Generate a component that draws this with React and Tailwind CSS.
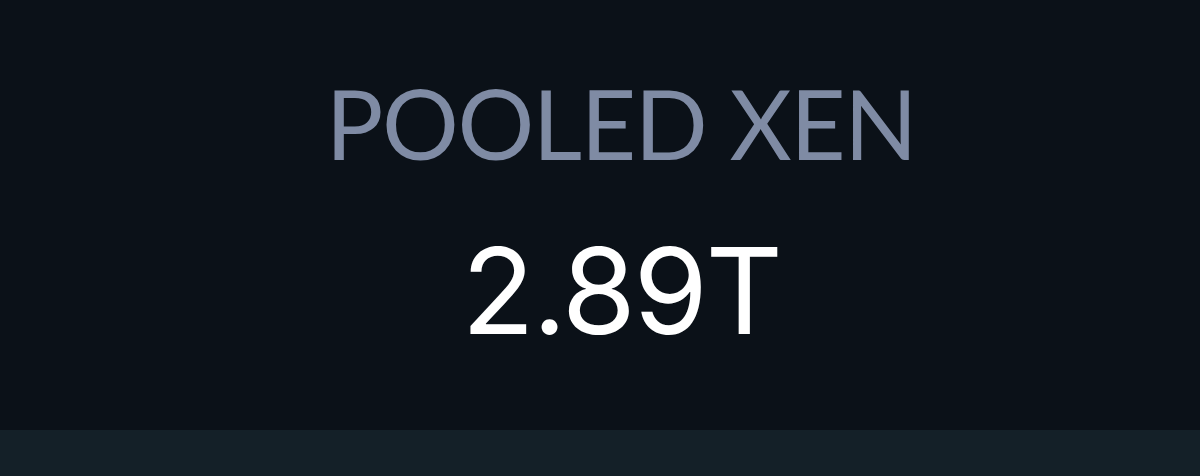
export default function App() {
  return (
    <div className="w-[1200px] h-[476px] flex flex-col bg-[#0b1118]">
      <div className="h-[430px] flex flex-col items-center pl-[42px] pt-[63px]">
        <h2 className="text-[96px] leading-[120px] font-normal text-[#7f8ba4] font-['Lato',sans-serif] tracking-[-0.015em]">
          POOLED XEN
        </h2>
        <div className="mt-[38px] text-[120px] leading-[140px] text-white font-['Inter',sans-serif] tracking-[-0.02em]">
          2.89T
        </div>
      </div>
      <div className="flex-1 bg-[#142028]" />
    </div>
  );
}
